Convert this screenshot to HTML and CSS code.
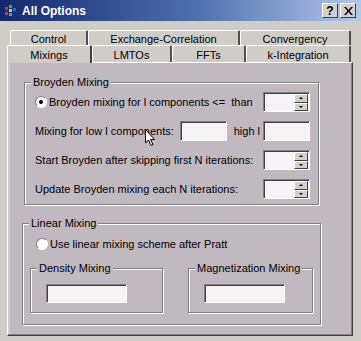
FILE: index.html
```html
<!DOCTYPE html>
<html lang="en">

<head>
    <meta charset="UTF-8">
    <title>All Options</title>
    <link rel="stylesheet" href="styles.css">
</head>

<body>
    <div class="titlebar">
        <svg class="app-icon" width="12" height="12" viewBox="0 0 12 12">
            <rect x="0" y="2" width="3" height="3" fill="#e03030"/>
            <rect x="4" y="0" width="3" height="3" fill="#30c030"/>
            <rect x="4" y="4" width="3" height="3" fill="#e0d020"/>
            <rect x="8" y="3" width="3" height="3" fill="#3060e0"/>
            <rect x="4" y="8" width="3" height="3" fill="#30c030"/>
            <rect x="0" y="7" width="3" height="3" fill="#c030c0"/>
        </svg>
        <span class="title">All Options</span>
        <div class="caption-buttons">
            <div class="cap-btn">?</div>
            <div class="cap-btn close">
                <svg width="9" height="8" viewBox="0 0 9 8">
                    <path d="M0 0 L2 0 L4.5 3 L7 0 L9 0 L5.5 4 L9 8 L7 8 L4.5 5 L2 8 L0 8 L3.5 4 Z" fill="#000"/>
                </svg>
            </div>
        </div>
    </div>

    <div class="dialog">
        <div class="tab-row back">
            <div class="tab" style="width: 78px">Control</div>
            <div class="tab" style="width: 152px">Exchange-Correlation</div>
            <div class="tab" style="width: 111px">Convergency</div>
        </div>
        <div class="tab-row front">
            <div class="tab selected" style="width: 85px">Mixings</div>
            <div class="tab" style="width: 80px">LMTOs</div>
            <div class="tab" style="width: 74px">FFTs</div>
            <div class="tab" style="width: 105px">k-Integration</div>
        </div>

        <div class="panel">
            <div class="group broyden">
                <span class="group-label">Broyden Mixing</span>
                <div class="row">
                    <span class="radio checked"></span>
                    <span class="label">Broyden mixing for l components &lt;=&nbsp; than</span>
                    <div class="spin">
                        <div class="field"></div>
                        <div class="spin-btns">
                            <div class="spin-btn"><i class="up"></i></div>
                            <div class="spin-btn"><i class="down"></i></div>
                        </div>
                    </div>
                </div>
                <div class="row">
                    <span class="label plain">Mixing for low l components:</span>
                    <div class="edit low"></div>
                    <span class="high">high l</span>
                    <div class="edit"></div>
                </div>
                <div class="row">
                    <span class="label plain">Start Broyden after skipping first N iterations:</span>
                    <div class="spin">
                        <div class="field"></div>
                        <div class="spin-btns">
                            <div class="spin-btn"><i class="up"></i></div>
                            <div class="spin-btn"><i class="down"></i></div>
                        </div>
                    </div>
                </div>
                <div class="row">
                    <span class="label plain">Update Broyden mixing each N iterations:</span>
                    <div class="spin">
                        <div class="field"></div>
                        <div class="spin-btns">
                            <div class="spin-btn"><i class="up"></i></div>
                            <div class="spin-btn"><i class="down"></i></div>
                        </div>
                    </div>
                </div>
            </div>

            <div class="group linear">
                <span class="group-label">Linear Mixing</span>
                <div class="row">
                    <span class="radio"></span>
                    <span class="label">Use linear mixing scheme after Pratt</span>
                </div>
                <div class="subgroups">
                    <div class="group sub density">
                        <span class="group-label">Density Mixing</span>
                        <div class="edit wide"></div>
                    </div>
                    <div class="group sub magnet">
                        <span class="group-label">Magnetization Mixing</span>
                        <div class="edit wide"></div>
                    </div>
                </div>
            </div>

            <!-- mouse pointer caught in the screenshot -->
            <svg class="cursor" width="11" height="18" viewBox="0 0 11 18">
                <path d="M0.5 0.5 L0.5 14 L3.5 11 L6 16.5 L8 15.5 L5.5 10.5 L9.5 10.5 Z" fill="#fff" stroke="#000" stroke-width="1"/>
            </svg>
        </div>
    </div>
</body>

</html>
```

FILE: styles.css
```css
body {
    margin: 0;
    width: 361px;
    height: 341px;
    overflow: hidden;
    background: #d0ccc8;
    font-family: 'Liberation Sans', Arial, sans-serif;
    font-size: 11px;
    color: #000;
}

/* title bar */
.titlebar {
    height: 21px;
    display: flex;
    align-items: center;
    padding: 0 5px;
    background: linear-gradient(to right, #12286e, #5070b0 55%, #b4c8ec);
}

.app-icon {
    margin-right: 5px;
}

.title {
    color: white;
    font-weight: bold;
    font-size: 12px;
}

.caption-buttons {
    margin-left: auto;
    display: flex;
    gap: 2px;
}

.cap-btn {
    width: 14px;
    height: 13px;
    background: #d4d0c8;
    border: 1px solid;
    border-color: #fff #404040 #404040 #fff;
    display: flex;
    align-items: center;
    justify-content: center;
    font-weight: bold;
    font-size: 12px;
}

/* tabs */
.dialog {
    padding-top: 9px;
}

.tab-row {
    display: flex;
}

.tab-row.back {
    margin-left: 10px;
    height: 15px;
}

.tab-row.front {
    margin-left: 7px;
    height: 17px;
}

.tab {
    box-sizing: border-box;
    height: 100%;
    display: flex;
    align-items: center;
    justify-content: center;
    border-left: 1px solid #fff;
    border-top: 1px solid #fff;
    border-right: 2px solid #505050;
    border-radius: 2px 2px 0 0;
    padding-top: 1px;
}

.tab.selected {
    position: relative;
    z-index: 1;
    height: calc(100% + 1px);
    background: #d0ccc8;
    border-right-color: #404040;
}

/* the page under the tabs */
.panel {
    position: relative;
    margin-left: 7px;
    width: 346px;
    height: 274px;
    box-sizing: border-box;
    background: #c0b9c0;
    border: 1px solid;
    border-color: #fff #404040 #404040 #fff;
    box-shadow: inset -1px -1px 0 #808080, inset 2px 0 0 #d0ccc8;
    padding: 19px 0 0 16px;
}

.group {
    position: relative;
    box-sizing: border-box;
    border: 1px solid #808080;
    box-shadow: inset 1px 1px 0 #fff, 1px 1px 0 #fff;
}

.group-label {
    position: absolute;
    top: -7px;
    left: 6px;
    padding: 0 2px;
    background: #c0b9c0;
    line-height: 13px;
}

.broyden {
    width: 295px;
    height: 123px;
    padding: 9px 8px 0 10px;
}

.row {
    display: flex;
    align-items: center;
    height: 20px;
    margin-bottom: 9px;
}

.broyden .row:nth-child(3) {
    margin-top: 1px;
}

.broyden .row:nth-child(5) {
    margin-top: 1px;
}

.label {
    flex: 1;
}

.label.plain {
    flex: none;
}

.radio {
    box-sizing: border-box;
    width: 12px;
    height: 12px;
    border-radius: 50%;
    border: 1px solid;
    border-color: #808080 #fff #fff #808080;
    background: #fff;
    margin-right: 2px;
    display: flex;
    align-items: center;
    justify-content: center;
}

.radio.checked::after {
    content: '';
    width: 4px;
    height: 4px;
    border-radius: 50%;
    background: #000;
}

.spin {
    margin-left: auto;
    box-sizing: border-box;
    width: 47px;
    height: 20px;
    display: flex;
    border: 1px solid;
    border-color: #808080 #fff #fff #808080;
    box-shadow: inset 1px 1px 0 #404040;
    background: #f6f3f6;
    padding: 1px 1px 0 1px;
}

.spin .field {
    flex: 1;
}

.spin-btns {
    width: 14px;
    display: flex;
    flex-direction: column;
}

.spin-btn {
    flex: 1;
    background: #d4d0c8;
    border: 1px solid;
    border-color: #fff #404040 #404040 #fff;
    display: flex;
    align-items: center;
    justify-content: center;
}

.spin-btn i {
    width: 0;
    height: 0;
    border-left: 2px solid transparent;
    border-right: 2px solid transparent;
}

.spin-btn .up {
    border-bottom: 2px solid #000;
}

.spin-btn .down {
    border-top: 2px solid #000;
}

.edit {
    box-sizing: border-box;
    width: 47px;
    height: 20px;
    border: 1px solid;
    border-color: #808080 #fff #fff #808080;
    box-shadow: inset 1px 1px 0 #404040;
    background: #f6f3f6;
}

.edit.low {
    margin-left: auto;
}

.high {
    margin: 0 3px 0 7px;
}

.linear {
    margin: 18px 0 0 -2px;
    width: 299px;
    height: 102px;
    padding: 10px 0 0 13px;
}

.linear .row {
    margin-bottom: 14px;
}

.subgroups {
    display: flex;
    gap: 25px;
    margin-left: -6px;
}

.group.sub {
    height: 45px;
    padding: 15px 0 0 15px;
}

.density {
    width: 133px;
}

.magnet {
    width: 125px;
}

.edit.wide {
    width: 81px;
    height: 19px;
}

.cursor {
    position: absolute;
    left: 137px;
    top: 66px;
}
```
